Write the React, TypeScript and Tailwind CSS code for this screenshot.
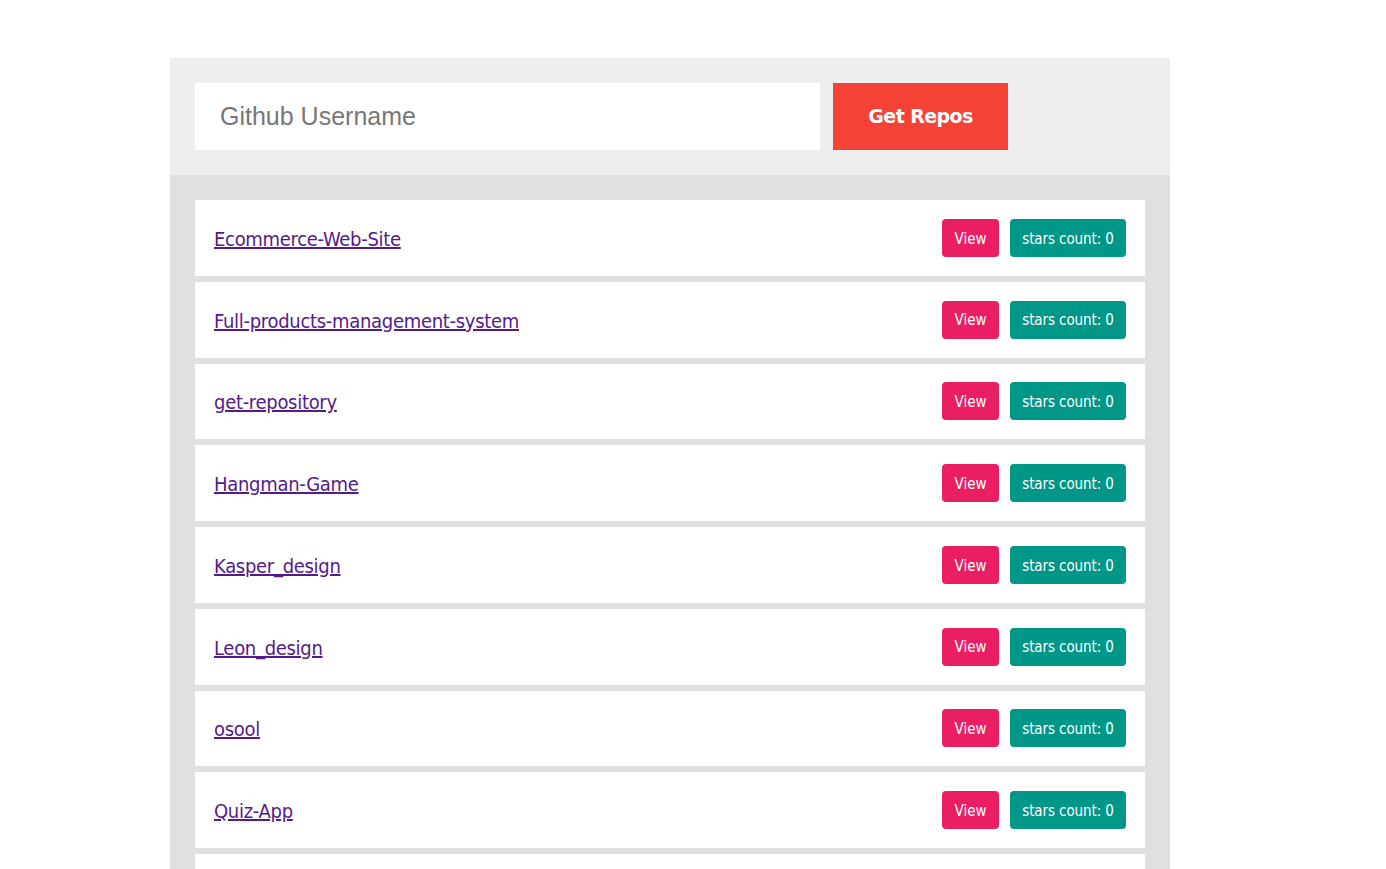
const repos = [
  'Ecommerce-Web-Site',
  'Full-products-management-system',
  'get-repository',
  'Hangman-Game',
  'Kasper_design',
  'Leon_design',
  'osool',
  'Quiz-App',
  'Shopping-Cart',
]

export default function App() {
  return (
    <div className="min-h-screen bg-white pt-[58px]">
      <div className="ml-[170px] w-[1000px]">
        {/* search form */}
        <div className="flex gap-[13px] bg-[#eeeeee] p-[25px]">
          <input
            placeholder="Github Username"
            className="h-[67px] w-[625px] bg-white px-[25px] text-[25px] text-[#555] outline-none placeholder:text-[#777] font-['Liberation_Sans',Arial,sans-serif]"
          />
          <button className="h-[67px] w-[175px] bg-[#f44336] text-[19px] font-bold text-white font-['DejaVu_Sans',Verdana,sans-serif] tracking-[-0.6px]">
            Get Repos
          </button>
        </div>

        {/* repo list */}
        <div className="flex flex-col gap-[6px] bg-[#e0e0e0] px-[25px] pt-[25px]">
          {repos.map((repo) => (
            <div
              key={repo}
              className="flex h-[75.75px] items-center justify-between bg-white px-[19px]"
            >
              <a
                href="#"
                className="pt-[2px] text-[20px] text-[#551a8b] underline font-['DejaVu_Sans_Condensed','DejaVu_Sans',sans-serif] tracking-[-0.3px]"
              >
                {repo}
              </a>
              <div className="flex gap-[11px] text-[15px] text-white font-['DejaVu_Sans_Condensed','DejaVu_Sans',sans-serif]">
                <span className="flex h-[38px] w-[57px] items-center justify-center rounded-[4px] bg-[#e91e63] pt-[2px]">
                  View
                </span>
                <span className="flex h-[38px] w-[116px] items-center justify-center rounded-[4px] bg-[#009688] pt-[2px] tracking-[-0.1px]">
                  stars count: 0
                </span>
              </div>
            </div>
          ))}
        </div>
      </div>
    </div>
  )
}
